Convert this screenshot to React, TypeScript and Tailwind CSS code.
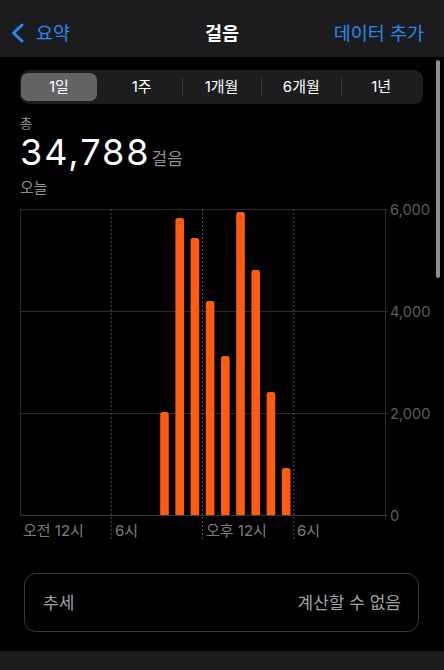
import React from "react";

const FONT = { fontFamily: 'Inter, "Noto Sans CJK KR", sans-serif' };

const bars = [
  { hour: 9, top: 412 },
  { hour: 10, top: 218 },
  { hour: 11, top: 238 },
  { hour: 12, top: 301 },
  { hour: 13, top: 356 },
  { hour: 14, top: 212 },
  { hour: 15, top: 270 },
  { hour: 16, top: 392 },
  { hour: 17, top: 468 },
];

const OY = 198; // svg top in page coords
const BASE = 515 - OY;
const LEFT = 20;
const RIGHT = 385;
const SLOT = (RIGHT - LEFT) / 24;

function barPath(cx: number, top: number) {
  const w = 8.6;
  const r = 2.5;
  const x0 = cx - w / 2;
  const x1 = cx + w / 2;
  const y = top - OY;
  return `M${x0},${BASE} L${x0},${y + r} Q${x0},${y} ${x0 + r},${y} L${x1 - r},${y} Q${x1},${y} ${x1},${y + r} L${x1},${BASE} Z`;
}

function Chart() {
  const grid = [209, 311, 413, 515].map((y) => y - OY);
  const top = grid[0];
  const yLabels = ["6,000", "4,000", "2,000", "0"];
  const dashed = [111.2, 202.5, 293.8];
  const xLabels = [
    { x: 23, t: "오전 12시" },
    { x: 115, t: "6시" },
    { x: 206, t: "오후 12시" },
    { x: 297, t: "6시" },
  ];
  return (
    <svg width={444} height={345} className="block" style={FONT}>
      {grid.map((y, i) => (
        <line key={i} x1={LEFT} x2={388} y1={y + 0.5} y2={y + 0.5} stroke="#2c2c2e" strokeWidth={1} />
      ))}
      <line x1={LEFT + 0.5} x2={LEFT + 0.5} y1={top} y2={BASE} stroke="#2c2c2e" strokeWidth={1} />
      <line x1={RIGHT + 0.5} x2={RIGHT + 0.5} y1={top} y2={BASE + 4} stroke="#2c2c2e" strokeWidth={1} />
      {dashed.map((x, i) => (
        <line key={i} x1={x} x2={x} y1={top} y2={540 - OY} stroke="#4a4a4d" strokeWidth={1} strokeDasharray="2 2" />
      ))}
      <line x1={LEFT} x2={RIGHT} y1={BASE + 0.5} y2={BASE + 0.5} stroke="#3a3a3c" strokeWidth={1} />
      {bars.map((b) => (
        <path key={b.hour} d={barPath(LEFT + SLOT * (b.hour + 0.5), b.top)} fill="#ff5c10" />
      ))}
      {yLabels.map((t, i) => (
        <text key={t} x={390} y={grid[i] + 5.5} fill="#5c5c60" fontSize={14.6}>
          {t}
        </text>
      ))}
      {xLabels.map((l, i) => (
        <text key={i} x={l.x} y={536 - OY} fill="#7c7c81" fontSize={15}>
          {l.t}
        </text>
      ))}
    </svg>
  );
}

export default function App() {
  const segs = ["1일", "1주", "1개월", "6개월", "1년"];
  return (
    <div className="w-[444px] h-[670px] bg-black flex flex-col overflow-hidden relative" style={FONT}>
      <header className="h-[57px] shrink-0 bg-[#1c1c1e] grid grid-cols-[1fr_auto_1fr] items-center pt-[8px] px-[10px]">
        <div className="flex items-center gap-[11px] text-[#2b87ee]">
          <svg width="15" height="20" viewBox="0 0 15 20" className="block">
            <path d="M12 2 L3.5 10 L12 18" fill="none" stroke="#2b87ee" strokeWidth="3" strokeLinecap="round" strokeLinejoin="round" />
          </svg>
          <span className="text-[18.5px] leading-[22px]">요약</span>
        </div>
        <div className="text-white text-[18.5px] leading-[22px] font-semibold">걸음</div>
        <div className="text-[#2b87ee] text-[18.5px] leading-[22px] text-right pr-[10px]">데이터 추가</div>
      </header>

      <main className="flex-1 flex flex-col">
        <div className="mt-[13px] ml-[20px] w-[403px] h-[34px] rounded-[9px] bg-[#1d1d20] p-[2px] grid grid-cols-5">
          {segs.map((s, i) => (
            <div key={s} className="relative flex items-center justify-center">
              {i === 0 && (
                <div className="absolute left-[-1px] right-[5px] top-[1px] bottom-[1px] rounded-[7px] bg-[#636366]" />
              )}
              {i >= 2 && <div className="absolute left-0 top-[6px] bottom-[6px] w-px bg-[#3a3a3c]" />}
              <span className={`relative text-white text-[15px] leading-[20px] ${i === 0 ? "mr-[6px]" : ""}`}>{s}</span>
            </div>
          ))}
        </div>

        <div className="px-[20px] mt-[10px] flex flex-col">
          <div className="text-[#8e8e93] text-[13px] leading-[18px]">총</div>
          <div className="flex items-baseline h-[40px]">
            <span className="text-white text-[36px] leading-[40px] tracking-[2px]">34,788</span>
            <span className="text-[#8e8e93] text-[17px] leading-[22px] ml-[1px]">걸음</span>
          </div>
          <div className="text-[#8e8e93] text-[15px] leading-[20px] mt-[6px]">오늘</div>
        </div>

        <div>
          <Chart />
        </div>

        <div className="mt-[30px] ml-[24px] w-[395px] h-[59px] rounded-[12px] border border-[#3a3a3c] flex items-center justify-between pl-[18px] pr-[17px]">
          <span className="text-[#a1a1a6] text-[17px] leading-[22px]">추세</span>
          <span className="text-[#a1a1a6] text-[17px] leading-[22px]">계산할 수 없음</span>
        </div>
      </main>

      <div className="h-[19px] shrink-0 bg-[#1c1c1e]" />

      <div className="absolute left-[436px] top-[60px] w-[4px] h-[218px] rounded-full bg-[#8e8e93]" />
    </div>
  );
}
